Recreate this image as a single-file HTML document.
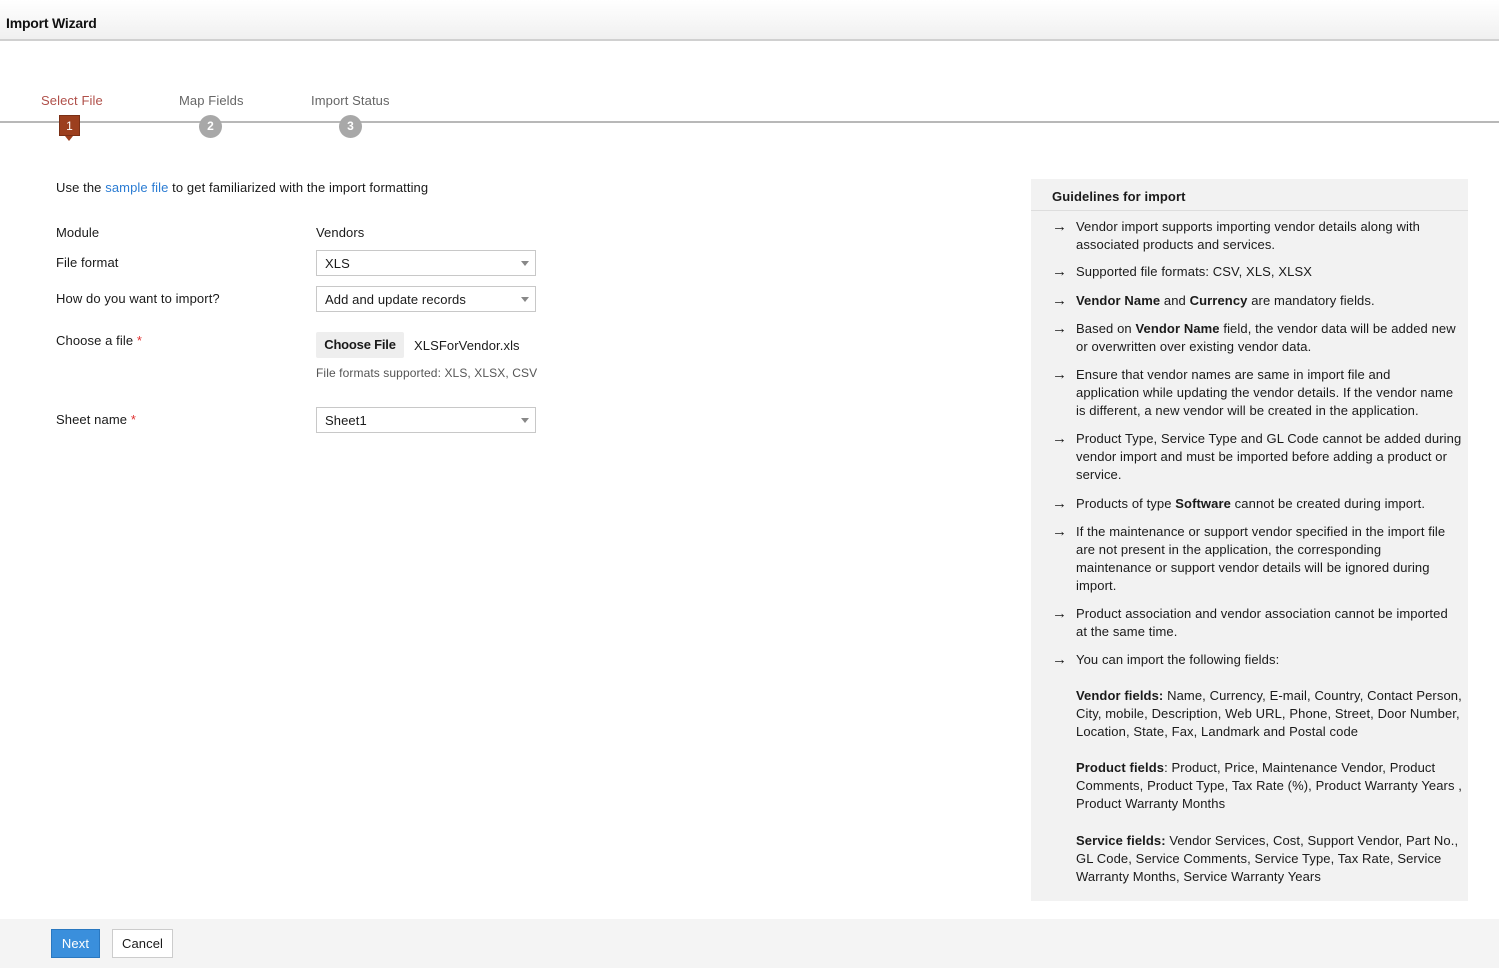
<!DOCTYPE html>
<html><head><meta charset="utf-8"><style>
*{margin:0;padding:0;box-sizing:border-box}
body{width:1499px;height:971px;position:relative;background:#fff;font-family:"Liberation Sans",Arial,sans-serif;font-size:13px;color:#1a1a1a;overflow:hidden;letter-spacing:0.1px}
.a{position:absolute;white-space:nowrap}
.hdr{position:absolute;left:0;top:0;width:1499px;height:41px;background:linear-gradient(#fff,#f0f0f0);border-bottom:2px solid #d0d0d0}
.sel{position:absolute;left:316px;width:220px;height:26px;border:1px solid #c8c8c8;background:#fff;padding:5px 8px;font-size:13px}
.sel:after{content:"";position:absolute;right:6px;top:10px;border-left:4px solid transparent;border-right:4px solid transparent;border-top:5px solid #888}
.panel{position:absolute;left:1031px;top:179px;width:437px;height:722px;background:#f2f2f2}
.it{position:absolute;left:45px;line-height:18px;white-space:nowrap}
.ar{position:absolute;left:21px;line-height:18px;font-size:15px;font-weight:bold}
.circ{position:absolute;top:115px;width:23px;height:23px;border-radius:50%;background:#a8a8a8;color:#fff;font-weight:bold;font-size:12px;text-align:center;line-height:23px}
</style></head><body>
<div class="hdr"></div>
<div class="a" style="left:6px;top:15px;font-weight:bold;font-size:14px;color:#111;letter-spacing:-0.2px">Import Wizard</div>
<div style="position:absolute;left:0;top:121px;width:1499px;height:2px;background:#b8b8b8"></div>
<div class="a" style="left:41px;top:93px;color:#b0504a">Select File</div>
<div class="a" style="left:179px;top:93px;color:#666">Map Fields</div>
<div class="a" style="left:311px;top:93px;color:#666">Import Status</div>
<div style="position:absolute;left:59px;top:115px;width:21px;height:21px;background:#9c3f1e;border:1px solid #7a2f15;color:#fff;font-size:12px;text-align:center;line-height:20px">1</div>
<div style="position:absolute;left:65px;top:136px;border-left:4px solid transparent;border-right:4px solid transparent;border-top:5px solid #9c3f1e"></div>
<div class="circ" style="left:199px">2</div>
<div class="circ" style="left:339px">3</div>

<div class="a" style="left:56px;top:180px">Use the <span style="color:#2b7cd3">sample file</span> to get familiarized with the import formatting</div>
<div class="a" style="left:56px;top:225px">Module</div>
<div class="a" style="left:316px;top:225px">Vendors</div>
<div class="a" style="left:56px;top:255px">File format</div>
<div class="sel" style="top:250px">XLS</div>
<div class="a" style="left:56px;top:291px">How do you want to import?</div>
<div class="sel" style="top:286px">Add and update records</div>
<div class="a" style="left:56px;top:333px">Choose a file <span style="color:#e03030">*</span></div>
<div style="position:absolute;left:316px;top:332px;width:88px;height:26px;background:#eee;border-radius:2px;font-weight:bold;text-align:center;line-height:26px;letter-spacing:-0.2px">Choose File</div>
<div class="a" style="left:414px;top:338px">XLSForVendor.xls</div>
<div class="a" style="left:316px;top:366px;font-size:12px;color:#555">File formats supported: XLS, XLSX, CSV</div>
<div class="a" style="left:56px;top:412px">Sheet name <span style="color:#e03030">*</span></div>
<div class="sel" style="top:407px">Sheet1</div>

<div class="panel">
<div class="a" style="left:21px;top:10px;font-weight:bold">Guidelines for import</div>
<div style="position:absolute;left:0;top:31px;width:437px;height:1px;background:#ddd"></div>
<div class="ar" style="top:39px">→</div><div class="it" style="top:39px">Vendor import supports importing vendor details along with<br>associated products and services.</div>
<div class="ar" style="top:84px">→</div><div class="it" style="top:84px">Supported file formats: CSV, XLS, XLSX</div>
<div class="ar" style="top:113px">→</div><div class="it" style="top:113px"><b>Vendor Name</b> and <b>Currency</b> are mandatory fields.</div>
<div class="ar" style="top:141px">→</div><div class="it" style="top:141px">Based on <b>Vendor Name</b> field, the vendor data will be added new<br>or overwritten over existing vendor data.</div>
<div class="ar" style="top:187px">→</div><div class="it" style="top:187px">Ensure that vendor names are same in import file and<br>application while updating the vendor details. If the vendor name<br>is different, a new vendor will be created in the application.</div>
<div class="ar" style="top:251px">→</div><div class="it" style="top:251px">Product Type, Service Type and GL Code cannot be added during<br>vendor import and must be imported before adding a product or<br>service.</div>
<div class="ar" style="top:316px">→</div><div class="it" style="top:316px">Products of type <b>Software</b> cannot be created during import.</div>
<div class="ar" style="top:344px">→</div><div class="it" style="top:344px">If the maintenance or support vendor specified in the import file<br>are not present in the application, the corresponding<br>maintenance or support vendor details will be ignored during<br>import.</div>
<div class="ar" style="top:426px">→</div><div class="it" style="top:426px">Product association and vendor association cannot be imported<br>at the same time.</div>
<div class="ar" style="top:472px">→</div><div class="it" style="top:472px">You can import the following fields:</div>
<div class="it" style="top:508px"><b>Vendor fields:</b> Name, Currency, E-mail, Country, Contact Person,<br>City, mobile, Description, Web URL, Phone, Street, Door Number,<br>Location, State, Fax, Landmark and Postal code</div>
<div class="it" style="top:580px"><b>Product fields</b>: Product, Price, Maintenance Vendor, Product<br>Comments, Product Type, Tax Rate (%), Product Warranty Years ,<br>Product Warranty Months</div>
<div class="it" style="top:653px"><b>Service fields:</b> Vendor Services, Cost, Support Vendor, Part No.,<br>GL Code, Service Comments, Service Type, Tax Rate, Service<br>Warranty Months, Service Warranty Years</div>
</div>

<div style="position:absolute;left:0;top:919px;width:1499px;height:49px;background:#f4f4f4"></div>
<div style="position:absolute;left:51px;top:929px;width:49px;height:29px;background:#3a8fdc;border:1px solid #2a78c0;color:#fff;text-align:center;line-height:27px">Next</div>
<div style="position:absolute;left:112px;top:929px;width:61px;height:29px;background:#fff;border:1px solid #ccc;text-align:center;line-height:27px">Cancel</div>
</body></html>
